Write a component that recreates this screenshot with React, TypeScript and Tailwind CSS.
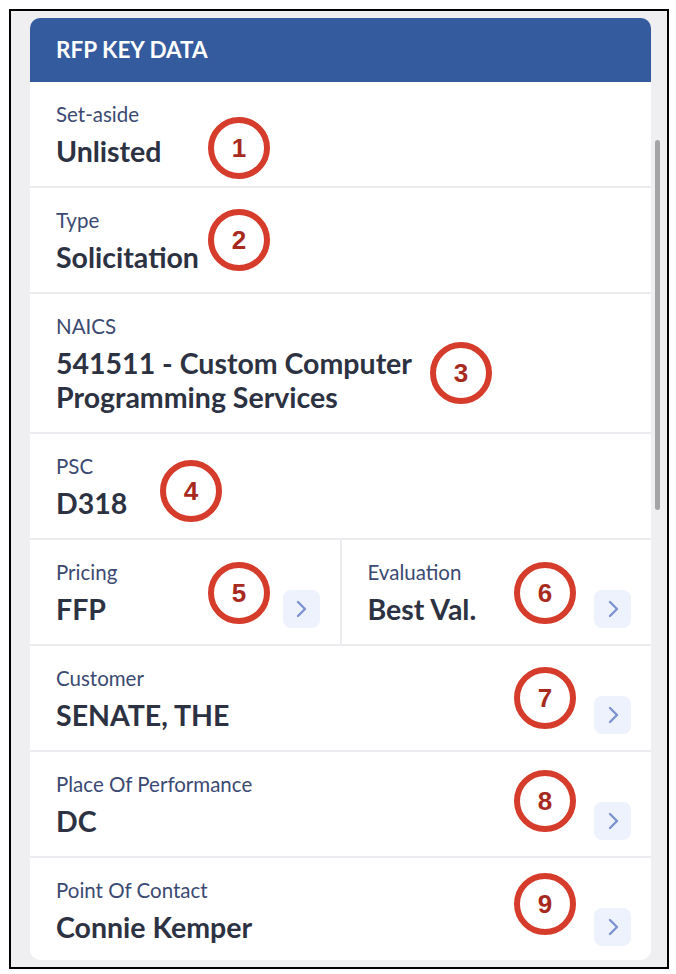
import React from "react";

const Chevron = () => (
  <div className="w-[37px] h-[38px] rounded-[8px] bg-[#eef2fd] flex items-center justify-center shrink-0">
    <svg width="24" height="24" viewBox="0 0 24 24" fill="none" stroke="#7d93cf" strokeWidth="2.4" strokeLinecap="round" strokeLinejoin="round">
      <path d="M9 5l7 7-7 7" />
    </svg>
  </div>
);

const Label = ({ children }: { children: React.ReactNode }) => (
  <div className="text-[20.5px] leading-[24px] text-[#3b4a72]">{children}</div>
);
const Value = ({ children }: { children: React.ReactNode }) => (
  <div className="mt-[8px] text-[28.5px] leading-[34px] font-bold text-[#2c3242]">{children}</div>
);

const Row = ({ label, value, button, last }: { label: string; value: React.ReactNode; button?: boolean; last?: boolean }) => (
  <div className={"flex items-end justify-between pl-[26px] pr-[20px] pt-[20px] pb-[16px] " + (last ? "" : "border-b-2 border-[#ebecef]")}>
    <div className="pb-[2px]">
      <Label>{label}</Label>
      <Value>{value}</Value>
    </div>
    {button && <Chevron />}
  </div>
);

const marks: [number, number, number][] = [
  [1, 239, 148],
  [2, 239, 240],
  [3, 461, 373],
  [4, 191, 491],
  [5, 239, 593],
  [6, 545, 593],
  [7, 545, 698],
  [8, 545, 801],
  [9, 545, 904],
];

export default function App() {
  return (
    <div className="relative w-[676px] h-[974px] bg-white overflow-hidden" style={{ fontFamily: "Lato, 'Noto Sans', sans-serif" }}>
      <div className="ml-[9px] mt-[9px] w-[660px] h-[960px] border-2 border-black bg-[#efeff1] flex pt-[7px] pl-[19px] pr-[3px] overflow-hidden">
        <div className="w-[621px] h-[942px] bg-white rounded-[10px] overflow-hidden flex flex-col shrink-0">
          <div className="h-[64px] bg-[#345b9e] px-[26px] flex items-center text-white font-bold text-[22.5px] shrink-0">
            RFP KEY DATA
          </div>
          <Row label="Set-aside" value="Unlisted" />
          <Row label="Type" value="Solicitation" />
          <Row label="NAICS" value={<>541511 - Custom Computer<br />Programming Services</>} />
          <Row label="PSC" value="D318" />
          <div className="flex border-b-2 border-[#ebecef]">
            <div className="flex-1 flex items-end justify-between pl-[26px] pr-[20px] pt-[20px] pb-[16px] border-r-2 border-[#ebecef]">
              <div className="pb-[2px]">
                <Label>Pricing</Label>
                <Value>FFP</Value>
              </div>
              <Chevron />
            </div>
            <div className="flex-1 flex items-end justify-between pl-[26px] pr-[20px] pt-[20px] pb-[16px]">
              <div className="pb-[2px]">
                <Label>Evaluation</Label>
                <Value>Best Val.</Value>
              </div>
              <Chevron />
            </div>
          </div>
          <Row label="Customer" value="SENATE, THE" button />
          <Row label="Place Of Performance" value="DC" button />
          <Row label="Point Of Contact" value="Connie Kemper" button last />
        </div>
        <div className="flex-1 flex justify-center">
          <div className="mt-[122px] w-[5px] h-[370px] rounded-full bg-[#a4a4a6]" />
        </div>
      </div>
      {marks.map(([n, x, y]) => (
        <div
          key={n}
          className="absolute w-[62px] h-[62px] rounded-full border-[6px] border-[#d63c2b] flex items-center justify-center text-[26px] font-bold text-[#a8291e]"
          style={{ left: x - 31, top: y - 31, fontFamily: "'Liberation Sans', Arial, sans-serif" }}
        >
          {n}
        </div>
      ))}
    </div>
  );
}
